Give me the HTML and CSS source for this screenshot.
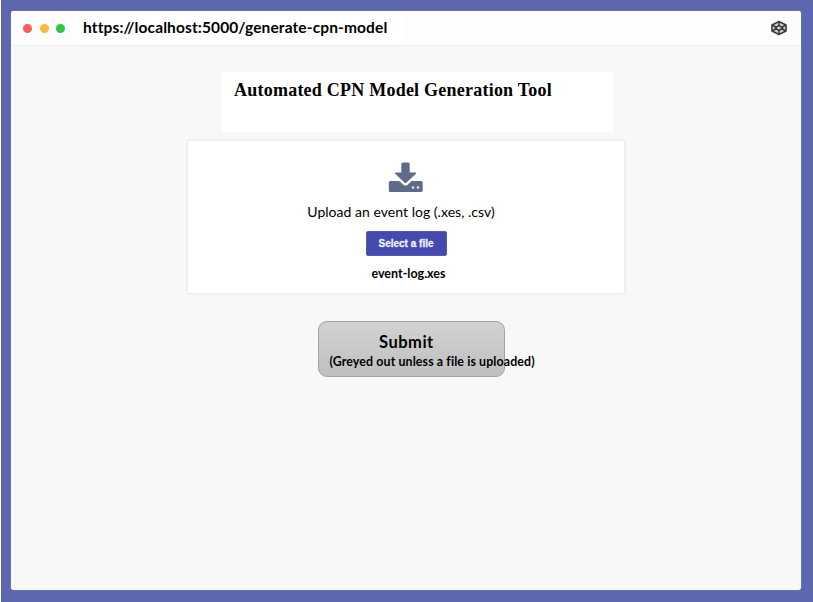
FILE: index.html
```html
<!DOCTYPE html>
<html lang="en">
<head>
<meta charset="utf-8">
<title>Automated CPN Model Generation Tool</title>
<link rel="stylesheet" href="styles.css">
</head>
<body>
<div class="window">
  <header class="bar">
    <span class="dot red"></span><span class="dot amber"></span><span class="dot green"></span>
    <div class="address"><span class="url">https://localhost:5000/generate-cpn-model</span></div>
    <svg class="logo" viewBox="0 0 18 16" fill="none" stroke="#3c3c3f" stroke-width="1.6" stroke-linejoin="round">
      <path fill="#d2d2d3" d="M9 1.500 16 5v6L9 14.500 2 11V5Z"/>
      <path d="M9 1.500V5.700M9 10.300v4.200M2 5l3.500 1.800M2 11l3.500-1.800M16 5l-3.500 1.800M16 11l-3.500-1.800M9 5.400 12.800 8 9 10.600 5.200 8Z"/>
    </svg>
  </header>
  <main class="content">
    <div class="heading"><h1>Automated CPN Model Generation Tool</h1></div>
    <section class="upload">
      <svg class="download" viewBox="0 0 36 32" fill="#5f6b88">
        <path d="M13.300 2q0-1.500 1.500-1.500h5.400q1.500 0 1.500 1.500v8.500h5.600q1.600 0 .5 1.200L18.500 20.500q-1 1-2 0l-9.300-8.800Q6.100 10.500 7.700 10.500h5.600Z"/>
        <path d="M2.300 19h9l3.700 3.600q2.500 2.200 5 0l3.700-3.600h9.500q1.500 0 1.500 1.500v8q0 1.500-1.500 1.500h-31Q.8 30 .8 28.500v-8Q.8 19 2.300 19Z"/>
        <circle cx="25" cy="25.500" r="1.250" fill="#e4e7ed"/><circle cx="30" cy="25.500" r="1.250" fill="#e4e7ed"/>
      </svg>
      <p class="prompt">Upload an event log (.xes, .csv)</p>
      <button class="select" type="button">Select a file</button>
      <p class="filename">event-log.xes</p>
    </section>
    <button class="submit" type="button">
      <span class="submit-title">Submit</span>
      <span class="submit-note">(Greyed out unless a file is uploaded)</span>
    </button>
  </main>
</div>
</body>
</html>
```
FILE: styles.css
```css
* { box-sizing: border-box; }
body {
  margin: 0;
  height: 602px;
  padding: 11px 12px 11px 10px;
  border-left: 1px solid #fff;
  background: #5c67b0;
  font-family: Lato, "Liberation Sans", sans-serif;
  color: #000;
  overflow: hidden;
}
.window {
  height: 579px;
  border-radius: 3px;
  background: #f8f8f8;
  box-shadow: 0 0 1px #d5d8ed;
  overflow: hidden;
}
.bar {
  display: flex;
  align-items: center;
  height: 35px;
  padding: 0 13px 0 12px;
  border-bottom: 1px solid #efefef;
  background: #fdfdfd;
}
.dot { width: 9px; height: 9px; margin-right: 7.500px; border-radius: 50%; }
.red { background: #fc5b5b; }
.amber { background: #fdb93b; }
.green { background: #2bc840; }
.address {
  width: 330px;
  height: 34px;
  padding-left: 10.500px;
  background: #fff;
  line-height: 31px;
  white-space: nowrap;
}
.url { font-size: 15.500px; font-weight: 700; letter-spacing: 0.120px; }
.logo { width: 18px; height: 16px; margin-left: auto; }
.content { display: flex; flex-direction: column; align-items: center; padding-top: 26px; }
.heading {
  width: 391px;
  height: 60px;
  margin-left: 23px;
  padding: 7px 0 0 12px;
  background: #fff;
}
h1 {
  margin: 0;
  font: 700 18px/22px "Liberation Serif", serif;
  letter-spacing: 0.230px;
  white-space: nowrap;
}
.upload {
  display: flex;
  flex-direction: column;
  align-items: center;
  width: 440px;
  height: 156px;
  margin: 7px 0 0 0;
  padding-top: 21px;
  border: 2px solid #f0f0f0;
  border-radius: 4px;
  background: #fff;
}
.download { width: 36px; height: 32px; }
.prompt { margin: 8px 10px 0 0; font-size: 14px; line-height: 20px; letter-spacing: 0.030px; white-space: nowrap; }
.select {
  width: 81px;
  height: 25px;
  margin-top: 9px;
  padding: 0;
  border: 1px solid #5659b7;
  border-radius: 2px;
  background: #454aae;
  color: #f0f0fc;
  font: 700 10px/22px "Liberation Sans", sans-serif;
  -webkit-text-stroke: 0.300px #f0f0fc;
}
.filename { margin: 9px 0 0 5px; font-size: 12.500px; font-weight: 700; line-height: 18px; }
.submit {
  display: flex;
  flex-direction: column;
  align-items: flex-start;
  width: 187px;
  height: 56px;
  margin: 26px 0 0 11px;
  padding: 10px 0 0 10.500px;
  border: 1px solid #a3a3a3;
  border-radius: 9px;
  background: linear-gradient(#d2d2d2, #bfbfbf);
  color: #000;
  font-family: inherit;
  font-weight: 700;
  white-space: nowrap;
}
.submit-title { margin-left: 49.500px; font-size: 16.500px; line-height: 20px; letter-spacing: 0.500px; }
.submit-note { font-size: 12.400px; line-height: 19px; letter-spacing: 0.110px; }
```
